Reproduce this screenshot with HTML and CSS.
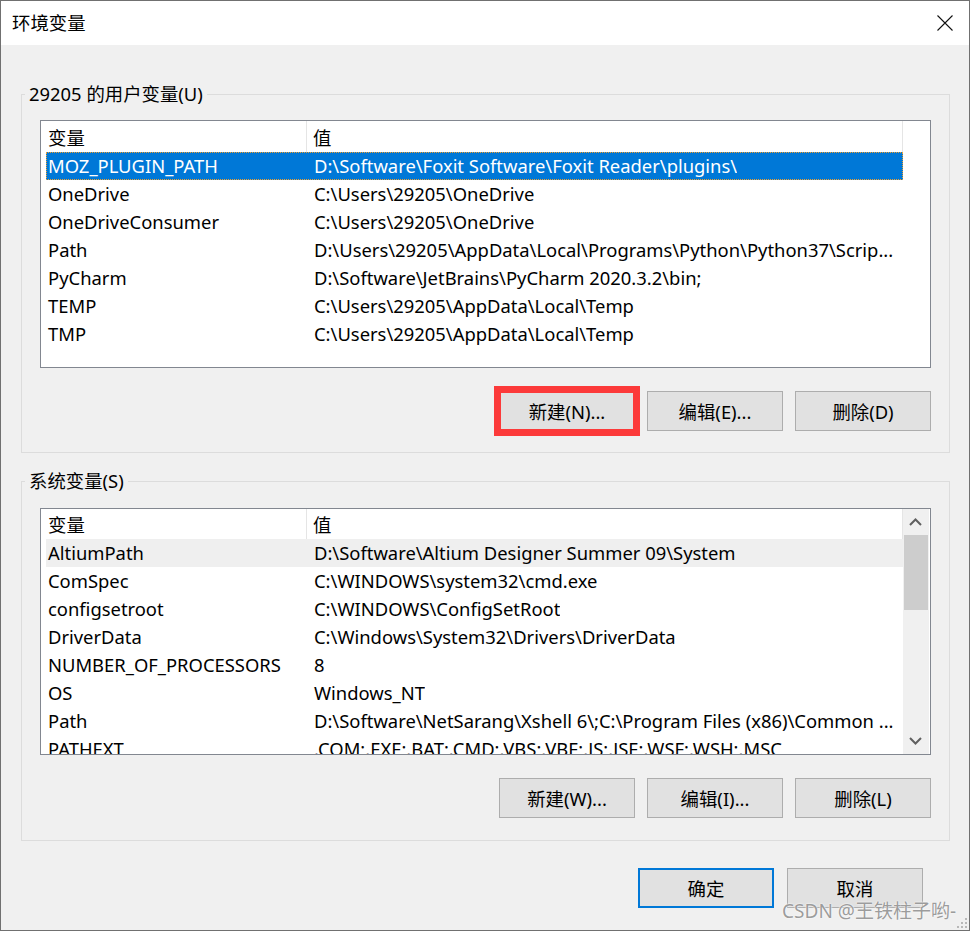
FILE: index.html
```html
<!DOCTYPE html>
<html>
<head>
  <meta charset="utf-8">
  <title>环境变量</title>
  <link rel="stylesheet" href="styles.css">
</head>
<body>
  <div class="window">
    <div class="titlebar">
      <span class="title">环境变量</span>
      <svg class="close" width="16" height="16" viewBox="0 0 16 16">
        <path d="M0.5 0.5 L15.5 15.5 M15.5 0.5 L0.5 15.5" stroke="#111" stroke-width="1.1" fill="none"/>
      </svg>
    </div>

    <div class="content">
      <div class="group group-user">
        <span class="group-label">29205 的用户变量(U)</span>
        <div class="list list-user">
          <div class="list-main">
            <div class="list-head">
              <div class="head-name">变量</div>
              <div class="head-value">值</div>
            </div>
            <div class="row selected"><span class="col-name">MOZ_PLUGIN_PATH</span><span class="col-value">D:\Software\Foxit Software\Foxit Reader\plugins\</span></div>
            <div class="row"><span class="col-name">OneDrive</span><span class="col-value">C:\Users\29205\OneDrive</span></div>
            <div class="row"><span class="col-name">OneDriveConsumer</span><span class="col-value">C:\Users\29205\OneDrive</span></div>
            <div class="row"><span class="col-name">Path</span><span class="col-value">D:\Users\29205\AppData\Local\Programs\Python\Python37\Scrip...</span></div>
            <div class="row"><span class="col-name">PyCharm</span><span class="col-value">D:\Software\JetBrains\PyCharm 2020.3.2\bin;</span></div>
            <div class="row"><span class="col-name">TEMP</span><span class="col-value">C:\Users\29205\AppData\Local\Temp</span></div>
            <div class="row"><span class="col-name">TMP</span><span class="col-value">C:\Users\29205\AppData\Local\Temp</span></div>
          </div>
        </div>
        <div class="buttons">
          <button class="btn marked">新建(N)...</button>
          <button class="btn">编辑(E)...</button>
          <button class="btn">删除(D)</button>
        </div>
      </div>

      <div class="group group-system">
        <span class="group-label">系统变量(S)</span>
        <div class="list list-system">
          <div class="list-main">
            <div class="list-head">
              <div class="head-name">变量</div>
              <div class="head-value">值</div>
            </div>
            <div class="row hover"><span class="col-name">AltiumPath</span><span class="col-value">D:\Software\Altium Designer Summer 09\System</span></div>
            <div class="row"><span class="col-name">ComSpec</span><span class="col-value">C:\WINDOWS\system32\cmd.exe</span></div>
            <div class="row"><span class="col-name">configsetroot</span><span class="col-value">C:\WINDOWS\ConfigSetRoot</span></div>
            <div class="row"><span class="col-name">DriverData</span><span class="col-value">C:\Windows\System32\Drivers\DriverData</span></div>
            <div class="row"><span class="col-name">NUMBER_OF_PROCESSORS</span><span class="col-value">8</span></div>
            <div class="row"><span class="col-name">OS</span><span class="col-value">Windows_NT</span></div>
            <div class="row"><span class="col-name">Path</span><span class="col-value">D:\Software\NetSarang\Xshell 6\;C:\Program Files (x86)\Common ...</span></div>
            <div class="row"><span class="col-name">PATHEXT</span><span class="col-value">.COM;.EXE;.BAT;.CMD;.VBS;.VBE;.JS;.JSE;.WSF;.WSH;.MSC</span></div>
          </div>
          <div class="scrollbar">
            <svg class="arrow" width="25" height="26" viewBox="0 0 25 26">
              <path d="M7 16 L12.5 10.5 L18 16" stroke="#606060" stroke-width="2" fill="none"/>
            </svg>
            <div class="thumb-track">
              <div class="thumb"></div>
            </div>
            <svg class="arrow" width="25" height="26" viewBox="0 0 25 26">
              <path d="M7 10 L12.5 15.5 L18 10" stroke="#606060" stroke-width="2" fill="none"/>
            </svg>
          </div>
        </div>
        <div class="buttons">
          <button class="btn">新建(W)...</button>
          <button class="btn">编辑(I)...</button>
          <button class="btn">删除(L)</button>
        </div>
      </div>

      <div class="dialog-buttons">
        <button class="btn default">确定</button>
        <button class="btn">取消</button>
      </div>
    </div>

    <span class="watermark">CSDN @王铁柱子哟-</span>
    <svg class="grip" width="12" height="12" viewBox="0 0 12 12">
      <rect x="9" y="1" width="2" height="2" fill="#b8b8b8"/>
      <rect x="5" y="5" width="2" height="2" fill="#b8b8b8"/>
      <rect x="9" y="5" width="2" height="2" fill="#b8b8b8"/>
      <rect x="1" y="9" width="2" height="2" fill="#b8b8b8"/>
      <rect x="5" y="9" width="2" height="2" fill="#b8b8b8"/>
      <rect x="9" y="9" width="2" height="2" fill="#b8b8b8"/>
    </svg>
  </div>
</body>
</html>
```

FILE: styles.css
```css
body {
  margin: 0;
  font-family: "Noto Sans", "Noto Sans CJK SC", sans-serif;
  font-size: 18.4px;
  color: #000;
  background: #f0f0f0;
}

.window {
  position: relative;
  width: 970px;
  height: 931px;
  box-sizing: border-box;
  border: 1px solid #707070;
  background: #f0f0f0;
  overflow: hidden;
}

.titlebar {
  height: 44px;
  background: #fff;
  display: flex;
  align-items: center;
  justify-content: space-between;
  padding: 0 16px 0 11px;
}

.title {
  line-height: 24px;
}

.close {
  display: block;
}

.content {
  display: flex;
  flex-direction: column;
}

.group {
  display: flex;
  flex-direction: column;
  margin: 0 19px 0 20px;
  padding: 0 18px 21px 18px;
  border: 1px solid #dcdcdc;
}

.group-user {
  margin-top: 49px;
}

.group-system {
  margin-top: 28px;
  padding-bottom: 22px;
}

.group-label {
  align-self: flex-start;
  height: 24px;
  line-height: 24px;
  margin: -13px 0 0 -15px;
  padding: 0 4px;
  background: #f0f0f0;
}

.list {
  margin-top: 14px;
  display: flex;
  background: #fff;
  border: 1px solid #828790;
  overflow: hidden;
  box-sizing: border-box;
}

.list-user {
  height: 248px;
}

.list-system {
  margin-top: 15px;
  height: 247px;
}

.list-main {
  width: 862px;
  flex: none;
}

.list-head {
  display: flex;
  height: 31px;
  line-height: 33px;
}

.list-system .list-head {
  height: 30px;
  line-height: 32px;
}

.head-name {
  width: 266px;
  padding-left: 7px;
  box-sizing: border-box;
  border-right: 1px solid #e5e5e5;
}

.head-value {
  flex: 1;
  padding-left: 6px;
  border-right: 1px solid #e5e5e5;
}

.row {
  display: flex;
  height: 28px;
  line-height: 28px;
  margin-left: 5px;
  white-space: nowrap;
  overflow: hidden;
}

.row.selected {
  background: #0078d7;
  color: #fff;
  outline: 1px dotted #f0a030;
  outline-offset: -1px;
}

.row.hover {
  background: #efefef;
}

.col-name {
  width: 261px;
  flex: none;
  padding-left: 2px;
  box-sizing: border-box;
}

.col-value {
  padding-left: 7px;
  overflow: hidden;
}

.scrollbar {
  width: 26px;
  flex: none;
  background: #f0f0f0;
  display: flex;
  flex-direction: column;
}

.arrow {
  display: block;
  flex: none;
}

.thumb-track {
  flex: 1;
}

.thumb {
  height: 75px;
  margin: 0 1px;
  background: #cdcdcd;
}

.buttons {
  display: flex;
  justify-content: flex-end;
  gap: 12px;
  margin-top: 23px;
}

.btn {
  width: 136px;
  height: 40px;
  font-family: inherit;
  font-size: 18.4px;
  color: #000;
  background: #e1e1e1;
  border: 1px solid #adadad;
  padding: 0;
}

.btn.marked {
  outline: 7px solid #fc3a3a;
  outline-offset: -2px;
}

.btn.default {
  border: 2px solid #0078d7;
}

.dialog-buttons {
  display: flex;
  justify-content: flex-end;
  gap: 13px;
  margin: 27px 46px 0 0;
}

.watermark {
  position: absolute;
  right: 13px;
  bottom: 6px;
  font-family: "Noto Sans", "Noto Sans CJK SC", sans-serif;
  font-size: 19px;
  color: #9c9c9c;
  text-shadow: 0 0 2px #fff, 0 0 1px #fff;
}

.grip {
  position: absolute;
  right: 1px;
  bottom: 1px;
}
```
